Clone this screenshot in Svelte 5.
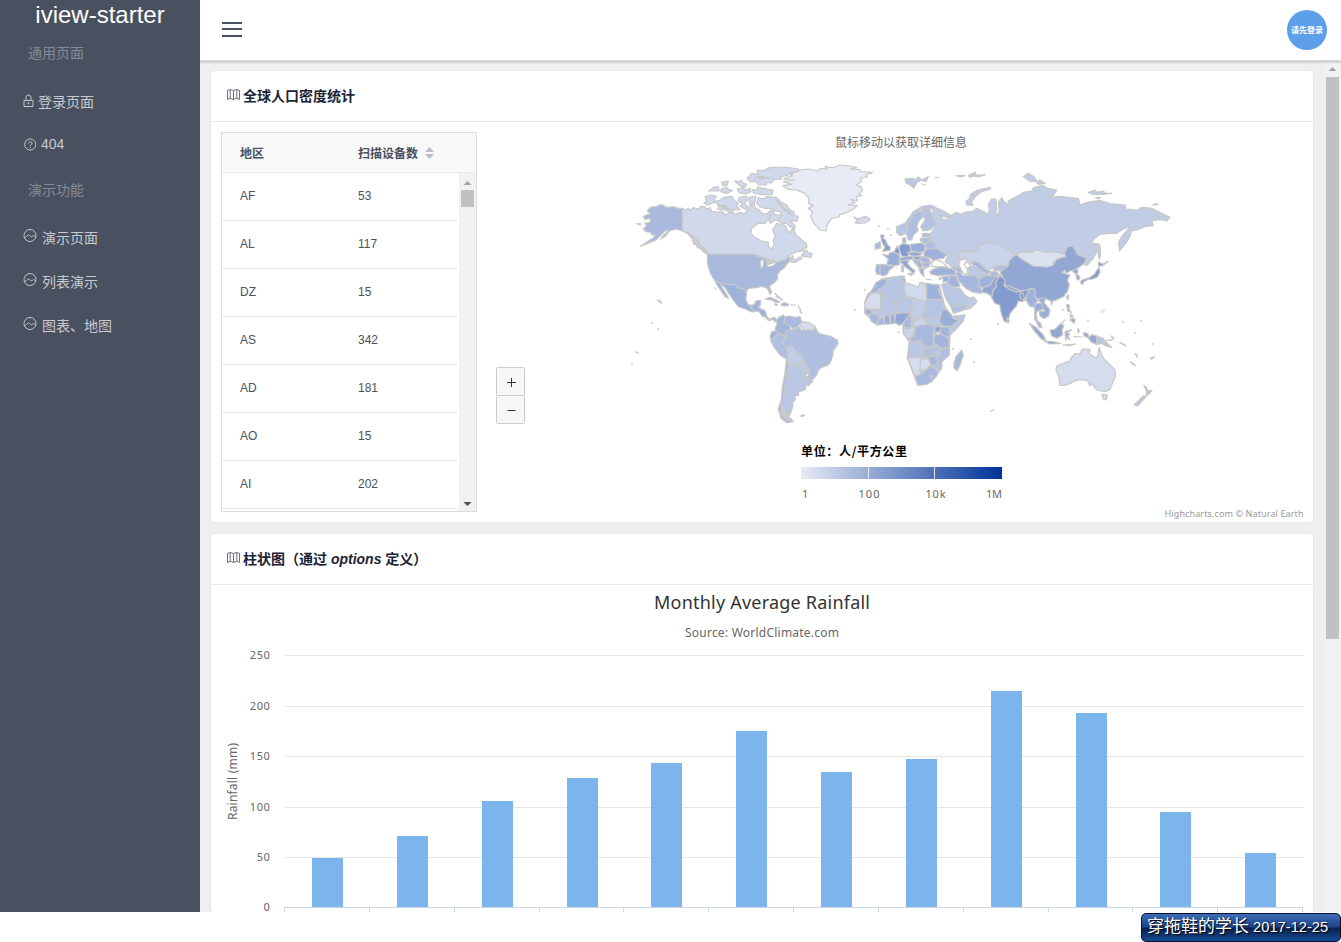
<script>
  const rows = [['AF', 53], ['AL', 117], ['DZ', 15], ['AS', 342], ['AD', 181], ['AO', 15], ['AI', 202]];
  const rain = [49.9, 71.5, 106.4, 129.2, 144, 176, 135.6, 148.5, 216.4, 194.1, 95.6, 54.4];
  const step = 84.83;
  const barTop = (value) => Math.round(907.9 - value * 1.004);
  const tickX = (i) => (i === 12 ? 1302.5 : Math.floor(284.6 + i * step) + 0.5);
  const grid = [[250, 655.5], [200, 706.5], [150, 756.5], [100, 807.5], [50, 857.5], [0, 907.5]];

  // Each region has its own origin; its outlines are in thirds of a pixel.
  const regions = [
    { name: 'north-america', x: 630, y: 155, shapes: [
      ['#cfd9eb', '157,160 165,165 175,160 180,166 190,158 205,162 212,154 225,155 228,163 240,158 245,168 262,172 275,168 285,180 300,172 315,178 330,172 340,176 350,170 358,158 362,142 372,140 375,158 388,165 395,175 408,178 418,170 425,176 418,190 405,205 385,205 365,220 362,235 375,248 395,258 415,262 416,276 425,282 432,270 430,255 436,245 428,225 440,205 450,208 465,212 478,235 486,222 492,225 496,238 510,250 530,268 530,278 515,282 525,287 500,290 480,300 465,315 440,320 415,328 400,315 390,305 372,298 232,298 220,290 205,275 195,258 180,240 157,228'],
      ['#a9b9de', '157,160 145,160 130,155 110,157 100,151 92,149 82,154 72,155 60,158 52,168 62,176 48,180 40,185 45,193 62,190 60,202 44,205 50,212 40,222 48,230 62,232 66,240 78,240 68,250 55,258 32,274 52,266 80,254 95,238 112,223 112,232 98,243 92,252 108,242 118,228 140,222 157,228'],
      ['#a9b9de', '232,298 372,298 385,306 398,308 410,318 412,334 420,336 432,330 440,322 465,315 478,305 480,318 468,330 462,340 450,348 442,360 443,372 430,385 418,393 425,412 420,418 412,400 395,394 380,398 355,400 348,412 340,400 325,400 315,388 295,388 270,384 255,378 240,352 232,325 233,310'],
      ['#9fb2dc', '255,378 262,392 275,410 285,425 295,430 288,415 275,396 272,386 285,398 298,418 312,438 325,455 345,462 365,471 376,470 382,462 390,452 392,438 378,440 372,450 355,450 347,432 350,415 340,400 325,400 315,388 295,388 270,384'],
      ['#cfd9eb', '385,128 400,132 410,125 440,128 452,140 470,150 480,165 492,170 492,180 505,185 500,200 480,196 495,212 494,222 480,215 470,205 455,205 440,195 455,180 450,170 435,168 420,160 405,160 390,155 380,145'],
      ['#cfd9eb', '352,70 365,55 385,58 380,45 400,47 420,38 465,36 505,42 508,48 485,52 470,62 450,65 455,72 430,75 425,84 405,82 410,90 385,90 378,80 360,80'],
      ['#cfd9eb', '368,104 385,105 382,96 410,102 430,106 425,119 395,119 370,114'],
      ['#cfd9eb', '252,140 270,136 280,128 305,124 312,136 325,145 320,152 330,165 305,163 310,175 285,165 262,162 268,150'],
      ['#cfd9eb', '225,125 245,120 260,125 250,132 258,140 235,150 222,145 230,138'],
      ['#cfd9eb', '328,128 350,123 352,138 342,145 354,155 348,164 330,153 338,145 325,138'],
      ['#cfd9eb', '356,128 378,123 375,140 364,150 358,142'], ['#cfd9eb', '236,108 250,98 265,95 268,108 250,108'],
      ['#cfd9eb', '275,82 295,78 292,90 278,92'], ['#cfd9eb', '274,103 288,96 296,104 308,106 290,115 272,110'],
      ['#cfd9eb', '314,78 328,80 334,76 340,85 350,88 346,97 330,92 322,85'], ['#cfd9eb', '322,102 340,98 345,105 360,100 363,110 345,117 328,113'],
      ['#cfd9eb', '418,168 430,165 432,178 455,182 445,192 430,198 422,205 415,192 422,185'],
      ['#cfd9eb', '515,300 530,285 534,293 546,296 543,308 532,304 518,305'], ['#cfd9eb', '480,312 488,302 492,316 510,306 515,312 495,322 485,322'],
      ['#ccc', '172,232 190,243 204,257 212,270 230,290 238,298 228,295 212,280 204,279 198,268 192,268 186,250 178,242'],
      ['#ccc', '375,68 400,64 388,72 420,68'], ['#ccc', '262,150 290,152 282,160 312,166'], ['#ccc', '440,136 458,160 478,176 490,184'],
      ['#ccc', '385,303 402,308 418,322 436,320'],
      ['#fff', '391,316 400,314 400,335 392,339'], ['#a9b9de', '20,206 32,206 30,210'], ['#ccc', '82,436 90,437 95,445'],
      ['#ccc', '434,415 444,422 438,424 458,436'], ['#ccc', '255,398 257,402'],
    ]},
    { name: 'south-america', x: 750, y: 290, shapes: [
      ['#9fb2dc', '0,52 15,42 18,33 33,31 30,42 25,53 45,62 50,78 58,88 72,82 83,91 76,95 68,88 55,92 47,82 36,78 28,66 10,60'],
      ['#9fb2dc', '45,27 60,22 75,28 90,36 78,38 68,31'], ['#9fb2dc', '94,42 103,38 116,43 114,48 94,47'], ['#ccc', '73,42 82,44 80,47'],
      ['#ccc', '124,44 131,45'], ['#ccc', '145,48 148,54 153,60 150,66 155,70'], ['#ccc', '135,45 136,47'],
      ['#a5b6dc', '78,95 86,82 100,75 105,80 102,98 120,105 120,120 107,125 105,138 80,128 75,118 82,100'],
      ['#aab9df', '105,80 118,78 135,82 150,80 155,95 145,108 128,118 122,108 102,98'],
      ['#d5dcee', '155,95 178,98 194,108 196,118 180,120 165,122 152,110'],
      ['#9fb2dc', '65,125 80,122 85,132 72,142 65,152 60,140'],
      ['#b0bfe0', '62,152 75,140 88,130 108,142 95,158 110,172 115,200 110,208 90,195 75,175'],
      ['#b0bfe0', '107,125 122,120 138,117 145,108 155,122 172,120 190,122 196,112 205,130 220,134 240,138 262,150 264,162 250,182 248,198 240,220 230,227 215,232 205,240 200,255 185,272 170,262 180,250 178,240 160,220 160,200 140,188 125,172 110,172 95,158 108,142'],
      ['#c1cde5', '114,172 128,169 142,188 158,198 163,213 145,218 140,226 122,226 112,210 113,192'],
      ['#bfcbe6', '145,222 163,214 168,232 178,240 178,250 160,250 145,232'], ['#b9c6e4', '165,260 178,265 188,275 175,287 163,282'],
      ['#b9c6e4', '118,228 140,226 160,245 170,252 163,262 163,280 168,290 164,300 145,306 146,315 132,320 137,328 128,338 128,350 120,375 108,378 100,365 100,330 105,290 110,255'],
      ['#b0bfe0', '109,208 118,228 110,255 105,290 100,330 100,365 112,378 122,385 130,395 110,398 93,385 88,365 84,358 94,330 97,290 105,250'],
      ['#ccc', '92,335 96,350 92,368 104,384 122,394'],
      ['#b9c6e4', '152,378 162,374 164,376 157,380'],
    ]},
    { name: 'greenland', x: 740, y: 155, shapes: [
      ['#e6ebf5', '130,80 165,75 130,72 158,62 150,58 182,45 205,42 235,48 240,40 262,42 255,35 280,38 300,30 330,33 350,38 330,42 360,44 362,50 398,52 378,60 382,66 360,70 365,78 350,90 362,95 368,105 357,118 365,122 348,126 352,138 332,133 345,143 325,150 352,152 340,162 322,172 300,178 297,186 275,190 262,208 258,228 240,225 222,205 212,184 218,170 205,160 220,152 205,145 207,130 195,115 170,105 145,103 128,92 155,88'],
      ['#d5dcee', '342,186 355,192 375,184 388,190 388,196 375,204 355,205 345,203 352,197'],
    ]},
    { name: 'africa', x: 850, y: 260, shapes: [
      ['#b7c5e4', '78,68 100,55 150,48 163,55 165,70 205,82 210,68 268,75 285,140 308,170 345,165 338,185 300,225 298,285 275,305 275,325 245,365 203,376 172,293 178,245 160,220 158,190 133,188 82,195 45,160 45,125 65,92'],
      ['#9fb2dc', '78,68 90,62 100,55 110,62 108,75 92,85 70,98 62,102 45,125 52,105 65,92 75,78'],
      ['#d5dcee', '45,125 62,102 68,98 92,102 92,148 60,148 45,145'],
      ['#b9c6e3', '110,60 130,53 155,48 157,65 163,75 165,100 172,112 140,132 92,98 85,88 108,75'],
      ['#a7b7dd', '155,48 163,48 166,65 160,72'],
      ['#cfdaed', '166,68 185,74 205,82 210,68 228,72 230,120 225,126 190,113 168,110 162,90'],
      ['#9db0db', '230,70 250,75 268,75 268,85 263,88 277,118 230,118'],
      ['#bac7e4', '92,100 138,132 138,155 115,160 98,175 88,170 75,160 65,152 92,148'],
      ['#bac7e4', '140,132 172,112 188,118 185,145 180,158 145,158 138,150'],
      ['#c2cee7', '188,115 225,126 222,155 215,172 190,183 182,160 188,145'],
      ['#b7c5e4', '230,118 275,118 285,140 272,165 262,175 230,172 218,162 222,150'],
      ['#bcc9e5', '225,175 262,172 272,190 255,197 235,192'], ['#c9d4ea', '188,187 218,172 235,192 210,198 190,198'],
      ['#99add9', '277,150 290,150 300,160 310,175 328,182 305,198 280,198 268,185 272,165'],
      ['#bac7e4', '312,168 345,165 338,185 320,205 300,225 298,205 308,198 328,180'],
      ['#a2b4dc', '272,200 298,202 298,230 290,232 270,220'], ['#8ea3d3', '255,200 272,200 270,215 255,218'],
      ['#93a7d5', '138,160 180,158 175,175 160,188 150,196 133,188'], ['#a7b7dd', '160,190 180,160 184,180 183,203 165,203'],
      ['#a9b9de', '195,200 215,195 245,195 252,205 248,225 252,250 245,262 225,258 212,242 185,245 180,235 195,225'],
      ['#c9d4ea', '160,206 178,205 195,200 190,225 175,238 160,220'],
      ['#a4b5dc', '255,225 275,222 295,235 298,260 275,265 255,255 250,240'],
      ['#b9c6e4', '177,245 210,248 218,262 215,292 175,292 178,270'], ['#b3c1e1', '218,265 245,265 262,252 268,270 240,290 218,290'],
      ['#b0bfe0', '270,268 298,262 298,285 275,305 275,325 262,332 265,305 255,290 270,285'],
      ['#a7b7dd', '235,292 255,288 265,300 255,318 240,312'], ['#d5dcee', '172,293 215,293 210,345 195,347 185,325'],
      ['#d5dcee', '212,298 232,295 243,312 225,332 210,330'], ['#a9b9de', '195,347 210,345 225,332 245,318 262,332 262,345 245,365 230,373 203,376'],
      ['#b7c5e4', '238,348 247,346 245,355'], ['#fff', '258,217 268,216 267,225 259,224'],
      ['#a9b9de', '335,270 340,285 330,315 322,332 312,325 312,310 318,290'],
      ['#9fb2dc', '45,148 60,148 68,160 55,165 45,160'], ['#a7b7dd', '55,165 75,160 85,172 82,195 65,185'],
      ['#a7b7dd', '85,178 100,172 103,192 85,195'], ['#99add9', '103,168 118,165 120,192 105,192'], ['#99add9', '122,165 133,162 133,190 122,192'],
    ]},
    { name: 'eurasia', x: 850, y: 155, shapes: [
      ['#c1cde5', '245,155 262,160 285,170 300,180 296,188 270,182 280,193 295,192 305,180 320,172 330,178 345,172 370,168 380,160 398,168 415,178 418,165 415,148 425,132 438,132 440,165 436,185 448,170 445,142 455,128 462,140 478,150 474,138 500,125 520,112 545,108 550,98 578,92 595,100 620,105 612,120 596,128 630,124 660,128 685,130 690,150 712,142 750,136 780,146 825,150 828,162 865,165 875,157 905,160 935,175 960,187 950,198 930,193 905,198 910,212 885,215 860,225 845,228 840,245 825,268 808,288 806,262 815,245 843,212 820,222 800,235 775,235 750,238 735,250 723,264 740,266 742,285 730,310 710,332 702,328 710,310 682,300 670,275 655,275 645,292 630,293 600,290 585,292 560,285 545,292 515,290 500,298 480,288 460,275 440,268 420,262 400,270 385,275 390,285 370,290 345,290 330,290 325,305 332,318 335,335 320,335 300,330 285,320 295,300 275,290 255,280 240,262 240,240 258,212 245,185 250,170'],
      ['#c1cde5', '350,150 348,138 358,132 362,118 382,106 420,97 422,102 395,110 378,122 365,140 368,152 358,150'],
      ['#b9c6e4', '165,72 190,70 194,76 205,66 215,75 235,65 228,80 212,75 200,84 192,100 178,88 168,84'], ['#ccc', '256,68 266,67'],
      ['#ccc', '318,62 332,66 345,62'], ['#ccc', '355,62 375,52 380,62 406,59 385,66 370,63 360,67'], ['#ccc', '216,87 226,90'],
      ['#c1cde5', '520,65 535,55 552,65 560,78 542,80 530,72'], ['#c1cde5', '558,82 570,75 585,85 565,88'],
      ['#c1cde5', '715,112 735,105 742,112 760,108 765,114 785,115 760,118 730,118'], ['#c1cde5', '737,128 752,127 744,131'], ['#c1cde5', '907,150 920,146 924,149'],
      ['#c1cde5', '744,265 750,272 752,300 748,312 744,300'],
      ['#b8c6e5', '140,215 165,205 180,185 190,170 215,155 240,150 255,155 240,162 215,162 198,172 182,195 172,215 168,235 150,242 140,232'],
      ['#afbee0', '198,172 215,168 220,185 205,200 200,215 205,225 190,240 185,255 175,255 170,238 175,210 185,190'],
      ['#b5c3e3', '215,165 235,158 245,175 250,195 257,210 240,225 220,228 212,215 226,195 218,180'],
      ['#9fb2dc', '158,250 166,248 168,262 158,262'], ['#adbce0', '217,236 238,235 240,245 218,246'], ['#adbce0', '212,250 240,248 235,262 222,265 212,258'],
      ['#8ea3d3', '92,240 103,240 99,250 106,254 112,268 122,278 120,286 98,289 105,276 99,268 94,256'], ['#a9b9de', '75,268 90,260 92,278 76,283'],
      ['#99add9', '98,298 115,301 118,294 132,290 150,303 147,320 150,328 135,332 110,328 115,312'], ['#a2b4dc', '90,328 110,330 132,335 118,345 112,358 98,363 90,358'],
      ['#9fb2dc', '80,328 90,330 89,358 80,358 77,345'], ['#849bcf', '148,272 160,265 180,270 182,290 172,305 155,303 148,285'],
      ['#849bcf', '132,290 143,272 149,290 147,299'], ['#99add9', '182,268 215,264 225,270 222,290 205,293 182,285'],
      ['#aebddf', '225,268 240,256 258,265 255,280 228,282'], ['#a0b2db', '222,292 230,282 258,280 275,290 292,298 280,310 262,312 250,318 240,308 222,305'],
      ['#93a7d5', '172,292 195,290 217,296 205,303 185,303'], ['#99add9', '148,310 165,305 190,303 188,312 165,316 150,318'],
      ['#99add9', '190,305 215,303 210,315 192,315'], ['#a7b7dd', '215,305 235,308 243,325 218,322 208,312'], ['#a7b7dd', '218,324 240,324 238,335 218,335'],
      ['#a7b7dd', '188,315 210,315 218,335 210,342 200,330'], ['#9fb2dc', '208,342 232,337 220,345 222,365 212,355'],
      ['#8ea3d3', '148,320 165,316 178,318 172,325 185,340 195,347 190,357 180,346 165,335 158,327'], ['#8ea3d3', '174,356 188,355 184,362'],
      ['#ccc', '155,332 160,330 160,350 155,350'], ['#ccc', '228,372 245,375'], ['#9fb2dc', '266,370 276,367 270,374'],
      ['#c9d3e9', '330,290 370,290 390,285 385,275 400,268 420,262 440,266 460,275 480,288 500,300 485,312 475,330 450,333 430,335 415,350 405,345 385,325 365,320 360,330 352,322 345,308 330,312 325,300'],
      ['#a3b5dd', '365,320 385,322 405,340 420,350 415,358 395,348 375,332 368,330'], ['#bccae5', '352,340 365,332 375,335 395,350 412,360 395,370 375,362 358,360'],
      ['#b0bfe0', '430,335 475,330 465,342 450,348 430,345'], ['#a7b7dd', '415,350 440,350 450,362 425,362'],
      ['#fff', '330,316 348,310 350,318 342,328 352,342 352,358 340,355 332,340 326,328'], ['#fff', '258,314 275,320 292,335 270,336 246,334 245,322'],
      ['#9fb2dc', '238,350 255,340 275,335 300,340 315,345 315,360 285,360 265,362 245,358'], ['#a7b7dd', '300,333 328,338 338,352 325,352 312,342'],
      ['#9fb2dc', '278,365 302,362 292,378 280,382'], ['#a2b4dc', '302,360 317,362 325,380 330,394 312,396 290,385'],
      ['#a7b7dd', '317,352 330,352 340,362 355,360 375,362 388,370 387,395 395,405 395,415 370,412 350,402 338,390 325,375'],
      ['#b9c6e4', '274,388 290,385 312,398 330,400 345,420 360,430 350,450 325,453 302,455 287,430'],
      ['#b3c1e1', '303,455 330,453 350,450 348,463 310,475'], ['#c1cde5', '352,430 370,426 382,440 365,457 352,463 350,450'],
      ['#9fb2dc', '387,372 405,362 425,362 452,358 435,370 420,390 400,398 388,395'],
      ['#93a7d5', '394,412 400,397 420,390 435,367 450,362 458,370 437,382 440,395 430,405 425,425 412,415'],
      ['#93a7d5', '500,298 512,310 525,318 550,333 590,336 610,329 618,315 640,306 645,292 655,273 670,275 682,298 710,310 703,325 685,338 675,345 660,348 648,355 645,345 636,352 650,358 660,360 652,375 658,390 652,410 640,425 620,434 605,440 590,432 570,435 555,425 550,402 530,405 510,407 480,400 465,390 460,370 450,350 475,332 478,315 490,305'],
      ['#dae2f0', '500,298 515,290 545,292 560,285 585,292 600,290 630,293 645,298 648,305 625,310 610,320 607,332 590,336 550,333 525,318 512,310'],
      ['#849bcf', '450,362 460,370 465,375 462,392 480,402 510,410 530,405 545,400 532,418 525,436 515,440 505,438 500,452 480,475 476,490 468,502 462,497 455,480 449,450 435,445 425,428 430,405 440,395 437,382'],
      ['#93a7d5', '463,392 475,392 508,406 500,412 480,404'], ['#849bcf', '510,414 520,416 524,434 512,432'],
      ['#93a7d5', '667,348 682,340 684,350 680,356 690,366 687,375 680,373 678,358'], ['#849bcf', '746,320 758,328 775,318 758,333 745,332'],
      ['#849bcf', '748,336 750,352 743,366 728,372 712,374 700,382 698,388 692,386 694,376 718,368 733,358 740,346'],
    ]},
    { name: 'oceania', x: 1000, y: 260, shapes: [
      ['#9fb2dc', '80,104 92,85 105,88 105,110 114,122 105,130 110,155 100,140 90,140 78,120'], ['#99add9', '107,130 125,130 132,148 112,153 108,165 112,182 104,180 104,155'],
      ['#99add9', '114,116 138,114 132,128 150,150 146,168 132,176 120,168 118,155 134,155 125,133'], ['#a7b7dd', '106,178 122,190 126,204 116,201'],
      ['#93a7d5', '88,190 108,202 130,225 138,242 125,238 105,215'], ['#849bcf', '132,243 165,246 182,251 150,252'], ['#ccc', '188,255 205,258 227,252'],
      ['#93a7d5', '150,210 165,208 182,190 192,197 186,210 188,224 172,235 155,228'], ['#99add9', '195,215 215,209 201,219 210,222 204,227 210,240 200,232 197,240'],
      ['#93a7d5', '200,133 208,135 207,148 215,158 203,153'], ['#93a7d5', '208,180 220,174 226,180 222,190 215,183'], ['#ccc', '184,194 194,180'], ['#ccc', '210,162 220,168 212,172'],
      ['#ccc', '234,205 238,213 234,220'], ['#ccc', '222,230 245,231'], ['#849bcf', '20,172 28,183 24,189 21,184'],
      ['#93a7d5', '250,218 262,220 268,232 275,224 290,228 290,253 275,247 264,233 253,229'], ['#b9c6e4', '290,228 308,234 318,246 335,262 318,258 306,250 290,253'],
      ['#ccc', '318,240 332,242 342,235 333,228 341,235 332,241'], ['#ccc', '360,248 370,252 378,258'], ['#ccc', '199,110 206,104 204,119'], ['#ccc', '152,130 158,127 155,135'],
      ['#ccc', '392,305 397,312 406,316'], ['#ccc', '450,295 463,290 455,298'], ['#ccc', '404,281 410,284 412,291'],
      ['#d5dcee', '170,318 195,308 208,304 215,292 225,280 240,282 245,270 250,267 270,268 268,282 290,295 295,280 297,262 305,285 315,300 330,315 345,330 346,350 335,375 330,388 315,395 290,390 275,370 270,378 262,362 235,358 210,370 195,376 180,376 178,355 168,330'],
      ['#d5dcee', '306,403 322,405 319,420 310,417'], ['#b9c6e4', '432,377 440,383 443,392 456,392 444,405 438,403 440,394'], ['#b9c6e4', '430,408 440,408 420,430 412,438 403,434 412,425'],
    ]},
  ];
  const dots = [[660,302],[652,323],[658,329],[632,364],[636,352],[638,353],[855,310],[865,290],[899,332],[953,349],[971,339],[974,362],[998,324],[991,411],[993,410],[1063,310],[1088,321],[1102,312],[1104,310],[1123,322],[1141,321],[1135,333],[1153,344],[879,226],[888,229],[891,235]];

  const menuTop = [['lock', '登录页面'], ['help', '404']];
  const menuDemo = ['演示页面', '列表演示', '图表、地图'];
</script>

{#snippet mapIcon()}
  <svg class="map-icon" width="13" height="13" viewBox="0 0 13 13" fill="none" stroke="#59606f" stroke-width=".9">
    <path d="M.5 2.500 L3.200 1.500 L6.500 2.500 L9.800 1.500 L12.500 2.500 V11.500 L9.800 10.300 L6.500 11.500 L3.200 10.300 L.5 11.500Z M3.200 1.500V10.300 M6.500 2.500V11.500 M9.800 1.500V10.300" />
  </svg>
{/snippet}

<div class="page">
  <aside>
    <h1>iview-starter</h1>
    <div class="group first">通用页面</div>
    {#each menuTop as [icon, label]}
      <div class="item {icon}">
        {#if icon === 'lock'}
          <svg width="11" height="14" viewBox="0 0 11 14" fill="none" stroke="#c3c6cb"><path d="M1 6.500h9v6H1z M3 6.500V3.500a2.500 2.500 0 0 1 5 0v3" /><path d="M4.200 8.500h2.600L5.500 10.700z" fill="#c3c6cb" stroke="none" /></svg>
        {:else}
          <svg width="13" height="13" viewBox="0 0 13 13" fill="none" stroke="#c3c6cb"><circle cx="6.200" cy="6.500" r="5.600" /><path d="M4.600 5.200c0-2 3.400-2 3.400 0C8 6.500 6.300 6.300 6.300 8M6.300 8.800v1.100" /></svg>
        {/if}
        <span>{label}</span>
      </div>
    {/each}
    <div class="group second">演示功能</div>
    {#each menuDemo as label}
      <div class="item demo">
        <svg width="14" height="14" viewBox="0 0 14 14" fill="none" stroke="#c3c6cb"><circle cx="7" cy="6.500" r="6" /><path d="M1.300 8.500C3.500 8.500 4 6 5.500 6S7.500 8.500 8.800 7.800 10 5.700 13 8" /></svg>
        <span>{label}</span>
      </div>
    {/each}
  </aside>

  <div class="main">
    <header>
      <div class="burger"><i></i><i></i><i></i></div>
      <div class="avatar">请先登录</div>
    </header>
    <div class="scroller">
      <div class="content">
        <section class="card overview">
          <div class="head">{@render mapIcon()}<b>全球人口密度统计</b></div>
          <div class="body">
            <div class="table">
              <div class="thead">
                <span class="c1">地区</span><span>扫描设备数</span>
                <svg width="9" height="12" viewBox="0 0 9 12" fill="#bbbec4"><path d="M0 5 4.500 0 9 5z M0 7h9L4.500 12z" /></svg>
              </div>
              <div class="tbody">
                <div class="rows">
                  {#each rows as [code, count]}
                    <div class="row"><span class="c1">{code}</span><span>{count}</span></div>
                  {/each}
                </div>
                <div class="bar">
                  <svg width="9" height="5" viewBox="0 0 9 5"><path d="M.5 5 4.500 1l4 4z" fill="#a3a3a3" /></svg>
                  <div class="thumb"></div>
                  <svg class="down" width="9" height="5" viewBox="0 0 9 5"><path d="M.5 0h8l-4 4z" fill="#505050" /></svg>
                </div>
              </div>
            </div>
            <svg class="map" width="836" height="400" viewBox="477 122 836 400">
              <defs>
                <linearGradient id="density"><stop offset="0" stop-color="#e6ebf5" /><stop offset="1" stop-color="#003399" /></linearGradient>
              </defs>
              <text class="cjk" x="835" y="147" font-size="12" fill="#666" textLength="132">鼠标移动以获取详细信息</text>
              {#each regions as region}
                <g class={region.name} transform="translate({region.x} {region.y}) scale(.33333)" stroke="#c8c8c8" stroke-width="3.700" stroke-linejoin="round">
                  {#each region.shapes as [fill, points]}<polygon {points} {fill} />{/each}
                </g>
              {/each}
              {#each dots as [x, y]}<circle cx={x} cy={y} r=".9" fill="#c8c8c8" />{/each}
              <rect x="496.500" y="367.500" width="28" height="28" rx="1" fill="#f7f7f7" stroke="#ccc" />
              <rect x="496.500" y="395.500" width="28" height="28" rx="1" fill="#f7f7f7" stroke="#ccc" />
              <path d="M507 382.500h9M511.500 378v9M507.500 410.500h8" stroke="#333" />
              <text class="cjk" x="801" y="456" font-size="12" font-weight="700" fill="#000" textLength="106">单位：人/平方公里</text>
              <rect x="801" y="467" width="201" height="12" fill="url(#density)" />
              <path d="M868.500 467v12M934.500 467v12" stroke="#e6e6e6" />
              <g font-size="11" fill="#666">
                <text x="802" y="498">1</text><text x="858.500" y="498" textLength="21">100</text><text x="925.500" y="498" textLength="20">10k</text><text x="986" y="498" textLength="16">1M</text>
              </g>
              <text x="1164.500" y="517" font-size="9" fill="#999" textLength="139">Highcharts.com © Natural Earth</text>
            </svg>
          </div>
        </section>

        <section class="card">
          <div class="head">{@render mapIcon()}<b>柱状图（通过 <em>options</em> 定义）</b></div>
          <svg class="rain" width="1102" height="327" viewBox="211 585 1102 327">
            <text x="654" y="609" font-size="18" fill="#333" textLength="216">Monthly Average Rainfall</text>
            <text x="685" y="637" font-size="12" fill="#666" textLength="154">Source: WorldClimate.com</text>
            <text transform="translate(237 820) rotate(-90)" font-size="12" fill="#666" textLength="77">Rainfall (mm)</text>
            {#each grid as [value, y]}
              <path d="M285 {y}H1303" stroke={value ? '#e6e6e6' : '#ccd6eb'} />
              <text x="270.500" y={y + 3.5} font-size="11" fill="#666" text-anchor="end" letter-spacing=".6">{value}</text>
            {/each}
            {#each rain as value, i}
              <rect x={Math.round(312.1 + i * step)} y={barTop(value)} width="31" height={907 - barTop(value)} fill="#7cb5ec" />
            {/each}
            {#each Array(13) as _, i}
              <path d="M{tickX(i)} 907v6" stroke="#ccd6eb" />
            {/each}
          </svg>
        </section>
      </div>
      <div class="page-bar">
        <svg width="9" height="5" viewBox="0 0 9 5"><path d="M.5 5 4.500 1l4 4z" fill="#a3a3a3" /></svg>
        <div class="page-thumb"></div>
      </div>
    </div>
  </div>
  <div class="stamp"><span>穿拖鞋的学长</span> 2017-12-25</div>
</div>

<style>
  :global(body) { background: #fff; overflow: hidden; }
  * { box-sizing: border-box; }
  .page { position: relative; width: 1341px; height: 942px; display: flex; align-items: flex-start; font-family: "Liberation Sans", "Noto Sans CJK SC", sans-serif; font-size: 12px; color: #495060; }
  aside { width: 200px; height: 912px; background: #495060; flex: none; color: #c8cacf; font-size: 14px; }
  h1 { margin: 0; height: 30px; line-height: 30px; font-size: 24px; font-weight: 400; color: #fff; text-align: center; }
  .group { padding-left: 28px; color: #858b96; height: 20px; line-height: 20px; }
  .first { margin-top: 13px; margin-bottom: 16px; }
  .second { margin-top: 15px; margin-bottom: 16px; }
  .item { display: flex; align-items: center; height: 44px; padding-left: 23px; }
  .lock svg { margin-top: -1px; }
  .lock span { margin-left: 4px; margin-top: -1px; }
  .help { height: 42px; }
  .help svg { margin-left: 1px; }
  .help span { margin-left: 4px; }
  .demo svg { margin-top: -4px; }
  .demo span { margin-left: 5px; margin-top: -2px; }
  .main { width: 1141px; height: 912px; display: flex; flex-direction: column; }
  header { position: relative; height: 60px; flex: none; background: #fff; box-shadow: 0 2px 1px 1px #d5d5d5; clip-path: inset(0 0 -4px 0); display: flex; justify-content: space-between; padding: 10px 14px 0 22px; }
  .burger { width: 20px; padding-top: 12px; display: flex; flex-direction: column; gap: 4px; }
  .burger i { display: block; height: 2px; background: #495060; }
  .burger i:last-child { margin-top: 1px; }
  .avatar { width: 40px; height: 40px; border-radius: 50%; background: #5d9fe8; color: #fff; font-size: 8px; font-weight: 700; line-height: 41px; text-align: center; white-space: nowrap; }
  .scroller { flex: 1; min-height: 0; display: flex; background: #efefef; }
  .content { flex: 1; padding: 10px 11px 0 10px; display: flex; flex-direction: column; gap: 10px; overflow: hidden; }
  .card { background: #fff; border: 1px solid #e7e8ea; border-radius: 4px; flex: none; overflow: hidden; }
  .overview { height: 453px; }
  .head { height: 51px; border-bottom: 1px solid #e9eaec; padding: 0 16px 3px; display: flex; align-items: center; font-size: 14px; color: #1c2438; }
  .map-icon { margin-right: 3px; }
  .body { display: flex; }
  .table { margin: 10px 0 0 10px; width: 256px; height: 380px; border: 1px solid #dddee1; flex: none; overflow: hidden; }
  .thead { height: 40px; background: #f8f8f9; border-bottom: 1px solid #e9eaec; font-weight: 700; display: flex; align-items: center; }
  .thead svg { margin-left: 7px; }
  .c1 { width: 136px; padding-left: 18px; }
  .tbody { display: flex; height: 338px; }
  .rows { width: 237px; overflow: hidden; }
  .row { height: 48px; border-bottom: 1px solid #e9eaec; padding-bottom: 2px; display: flex; align-items: center; }
  .bar { width: 17px; margin-left: 1px; background: #f1f1f1; display: flex; flex-direction: column; align-items: center; padding: 7px 0 4px; }
  .thumb { width: 13px; height: 17px; margin-top: 5px; background: #c1c1c1; }
  .down { margin-top: auto; }
  svg text { font-family: "Noto Sans", "Noto Sans CJK SC", sans-serif; }
  svg text.cjk { font-family: "Noto Sans CJK SC", sans-serif; }
  .rain { display: block; }
  .page-bar { width: 16px; padding: 6px 1px 0 0; background: #f1f1f1; display: flex; flex-direction: column; align-items: center; }
  .page-thumb { width: 13px; height: 562px; margin-top: 6px; background: #c1c1c1; }
  .stamp { position: absolute; right: 0; bottom: 0; width: 200px; height: 29px; border: 1px solid #06122b; border-radius: 5px; background: linear-gradient(#3d6cb5, #1d4489 48%, #07204f 52%, #174a93); color: #fff; font-size: 14.700px; line-height: 26px; padding-left: 5px; white-space: nowrap; text-shadow: 1px 1px 1px #000; }
  .stamp span { font-size: 17px; }
</style>
